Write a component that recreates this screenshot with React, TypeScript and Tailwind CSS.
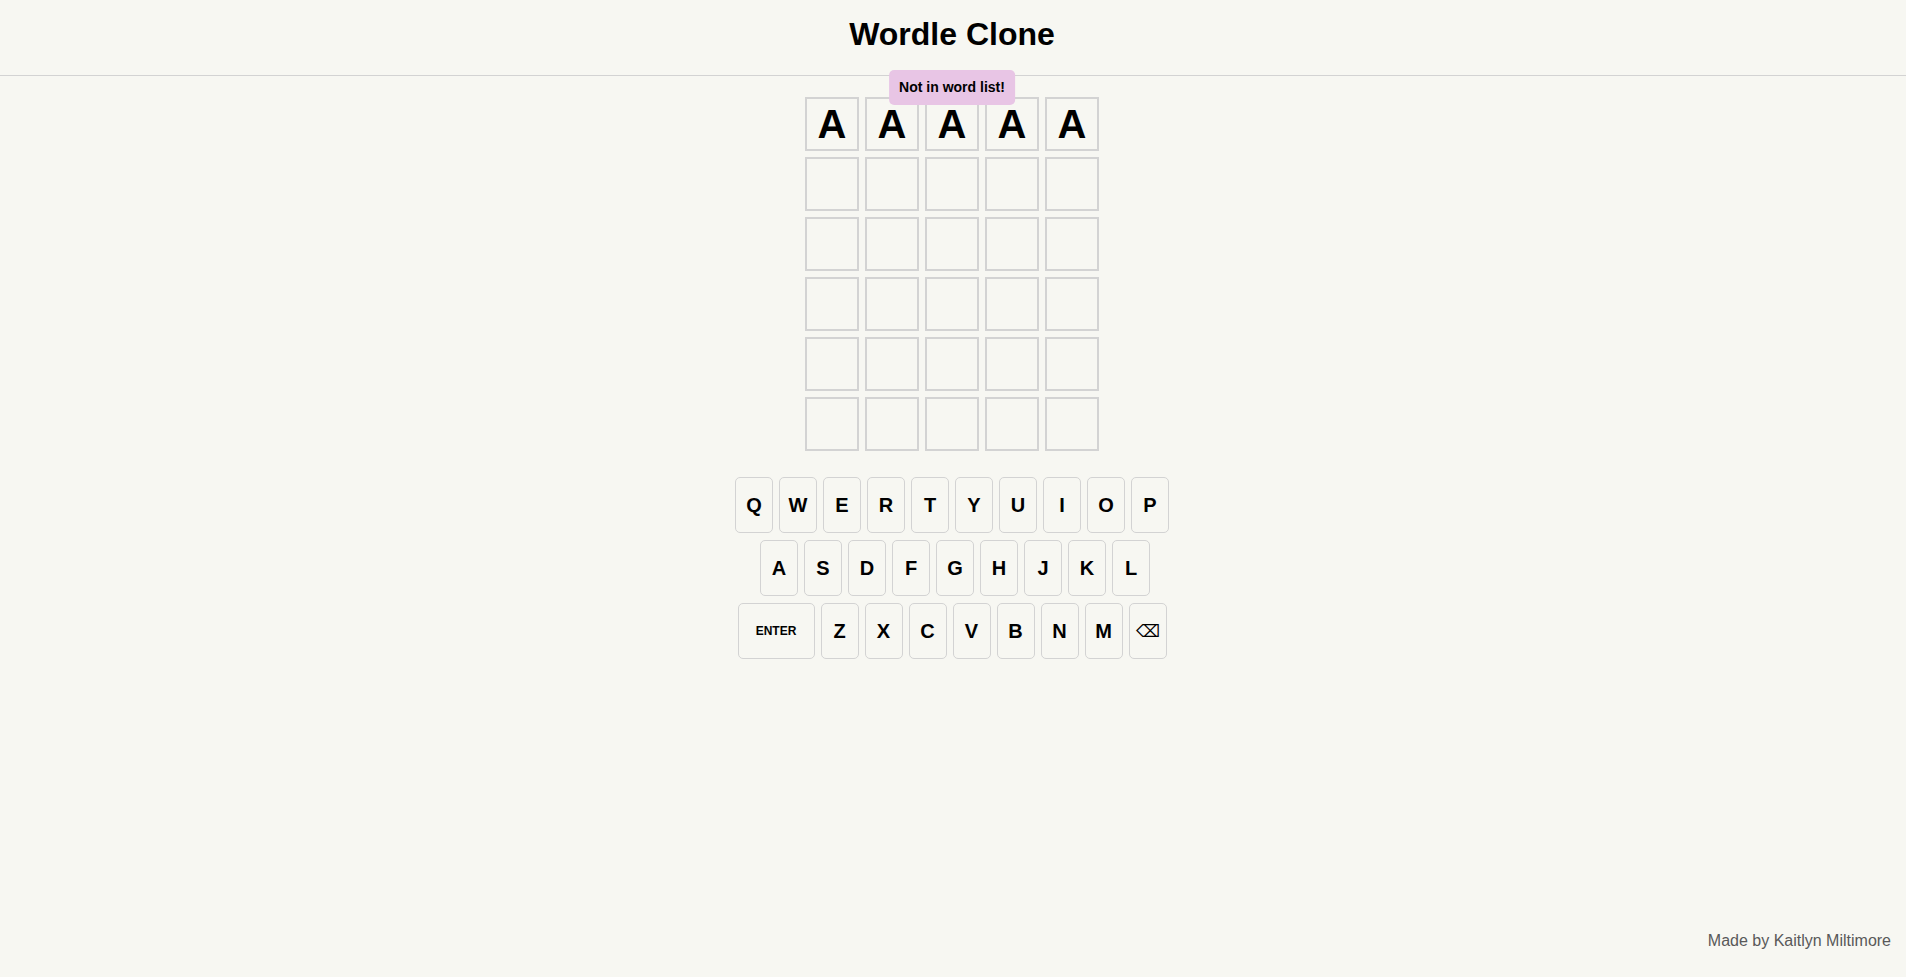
import React from 'react';

const ROWS = ['QWERTYUIOP', 'ASDFGHJKL', 'ZXCVBNM'];

const guesses = ['AAAAA', '', '', '', '', ''];

const Tile = ({ letter }: { letter: string }) => (
  <div className="w-[54px] h-[54px] border-2 border-[#d3d3d3] flex items-center justify-center text-[40px] font-bold text-black leading-none">
    {letter}
  </div>
);

const Key = ({ label, wide }: { label: string; wide?: boolean }) => (
  <button
    className={`${wide ? 'w-[77px] text-[12px]' : 'w-[38px] text-[20px]'} h-[56px] rounded-[5px] border border-[#d3d3d3] bg-[#f7f7f2] font-bold text-black flex items-center justify-center`}
  >
    {label}
  </button>
);

export default function App() {
  return (
    <div
      className="min-h-screen flex flex-col bg-[#f7f7f2] text-black"
      style={{ fontFamily: '"Liberation Sans", Arial, sans-serif' }}
    >
      <header className="h-[76px] border-b border-[#d3d3d3] flex justify-center pt-[16px] pr-[2px]">
        <h1 className="text-[32px] font-bold leading-[37px]">Wordle Clone</h1>
      </header>

      <main className="relative flex flex-col items-center pt-[21px] pr-[2px]">
        <div className="absolute top-[-6px] left-1/2 -translate-x-[calc(50%+1px)] bg-[#e8c5e5] rounded-[5px] px-[10px] py-[9px] text-[14px] font-bold leading-[17px] whitespace-nowrap">
          Not in word list!
        </div>

        <div className="grid grid-cols-5 gap-[6px]">
          {guesses.map((word, r) =>
            Array.from({ length: 5 }).map((_, c) => (
              <Tile key={`${r}-${c}`} letter={word[c] ?? ''} />
            ))
          )}
        </div>

        <div className="mt-[26px] flex flex-col items-center gap-[7px]">
          <div className="flex gap-[6px]">
            {ROWS[0].split('').map((k) => (
              <Key key={k} label={k} />
            ))}
          </div>
          <div className="flex gap-[6px] pl-[6px]">
            {ROWS[1].split('').map((k) => (
              <Key key={k} label={k} />
            ))}
          </div>
          <div className="flex gap-[6px]">
            <Key label="ENTER" wide />
            {ROWS[2].split('').map((k) => (
              <Key key={k} label={k} />
            ))}
            <button className="w-[38px] h-[56px] rounded-[5px] border border-[#d3d3d3] bg-[#f7f7f2] text-[17px] text-black flex items-center justify-center pt-[2px]">
              ⌫
            </button>
          </div>
        </div>
      </main>

      <footer className="mt-auto text-right pr-[15px] pb-[24px] text-[16px] text-[#595959]">
        Made by Kaitlyn Miltimore
      </footer>
    </div>
  );
}
